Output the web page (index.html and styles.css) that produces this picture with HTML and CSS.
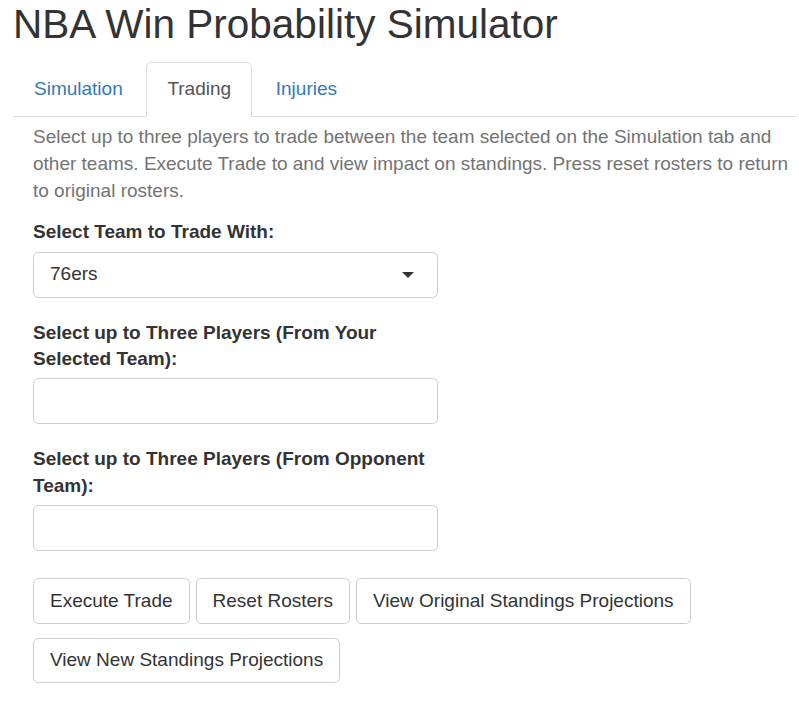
FILE: index.html
```html
<!DOCTYPE html>
<html>
<head>
<meta charset="utf-8">
<title>NBA Win Probability Simulator</title>
<link rel="stylesheet" href="styles.css">
</head>
<body>
<div class="page">
  <h2 class="title">NBA Win Probability Simulator</h2>
  <ul class="tabs">
    <li class="tab"><a href="#">Simulation</a></li>
    <li class="tab active"><a href="#">Trading</a></li>
    <li class="tab"><a href="#">Injuries</a></li>
  </ul>
  <div class="pane">
    <span class="help">Select up to three players to trade between the team selected on the Simulation tab and other teams. Execute Trade to and view impact on standings. Press reset rosters to return to original rosters.</span>
    <div class="group">
      <label class="label">Select Team to Trade With:</label>
      <div class="field select">
        <span class="value">76ers</span>
        <span class="caret"></span>
      </div>
    </div>
    <div class="group">
      <label class="label">Select up to Three Players (From Your Selected Team):</label>
      <div class="field"></div>
    </div>
    <div class="group">
      <label class="label">Select up to Three Players (From Opponent Team):</label>
      <div class="field"></div>
    </div>
    <div class="actions">
      <button class="btn">Execute Trade</button>
      <button class="btn">Reset Rosters</button>
      <button class="btn">View Original Standings Projections</button>
      <button class="btn">View New Standings Projections</button>
    </div>
  </div>
</div>
</body>
</html>
```
FILE: styles.css
```css
html, body {
  margin: 0;
  padding: 0;
  background: #fff;
}
body {
  font-family: "Liberation Sans", Arial, Helvetica, sans-serif;
  font-size: 19px;
  line-height: 26.67px;
  color: #333;
}
.page {
  padding: 0 2px 0 13px;
}
.title {
  margin: 2px 0 16px;
  font-size: 40.5px;
  line-height: 44px;
  font-weight: normal;
  color: #333;
}
.tabs {
  list-style: none;
  margin: 0;
  padding: 0;
  display: flex;
  border-bottom: 1px solid #ddd;
}
.tab {
  margin-bottom: -1px;
}
.tab a {
  display: block;
  padding: 13.33px 20px;
  margin-right: 2.67px;
  border: 1px solid transparent;
  border-radius: 5.33px 5.33px 0 0;
  color: #337ab7;
  text-decoration: none;
}
.tab.active a {
  color: #555;
  background: #fff;
  border-color: #ddd #ddd transparent;
}
.pane {
  padding: 0 3px 0 20px;
}
.help {
  display: block;
  margin: 7px 0 15px;
  color: #737373;
}
.group {
  width: 405px;
  margin-bottom: 22px;
}
.label {
  display: inline-block;
  max-width: 100%;
  margin-bottom: 5.5px;
  font-weight: bold;
}
.field {
  box-sizing: border-box;
  height: 46px;
  border: 1px solid #ccc;
  border-radius: 5.33px;
  background: #fff;
  padding: 0 16px;
  display: flex;
  align-items: center;
  justify-content: space-between;
}
.caret {
  width: 0;
  height: 0;
  border-style: solid;
  border-width: 6.5px 6.5px 0;
  border-color: #333 transparent transparent;
  margin-right: 7px;
}
.actions {
  margin-top: 27px;
  display: flex;
  flex-wrap: wrap;
  gap: 14px 6px;
  padding-bottom: 20px;
}
.btn {
  box-sizing: border-box;
  height: 45.5px;
  padding: 8px 16px;
  font-family: inherit;
  font-size: 19px;
  line-height: 26.67px;
  color: #333;
  background: #fff;
  border: 1px solid #ccc;
  border-radius: 5.33px;
  cursor: pointer;
}
```
